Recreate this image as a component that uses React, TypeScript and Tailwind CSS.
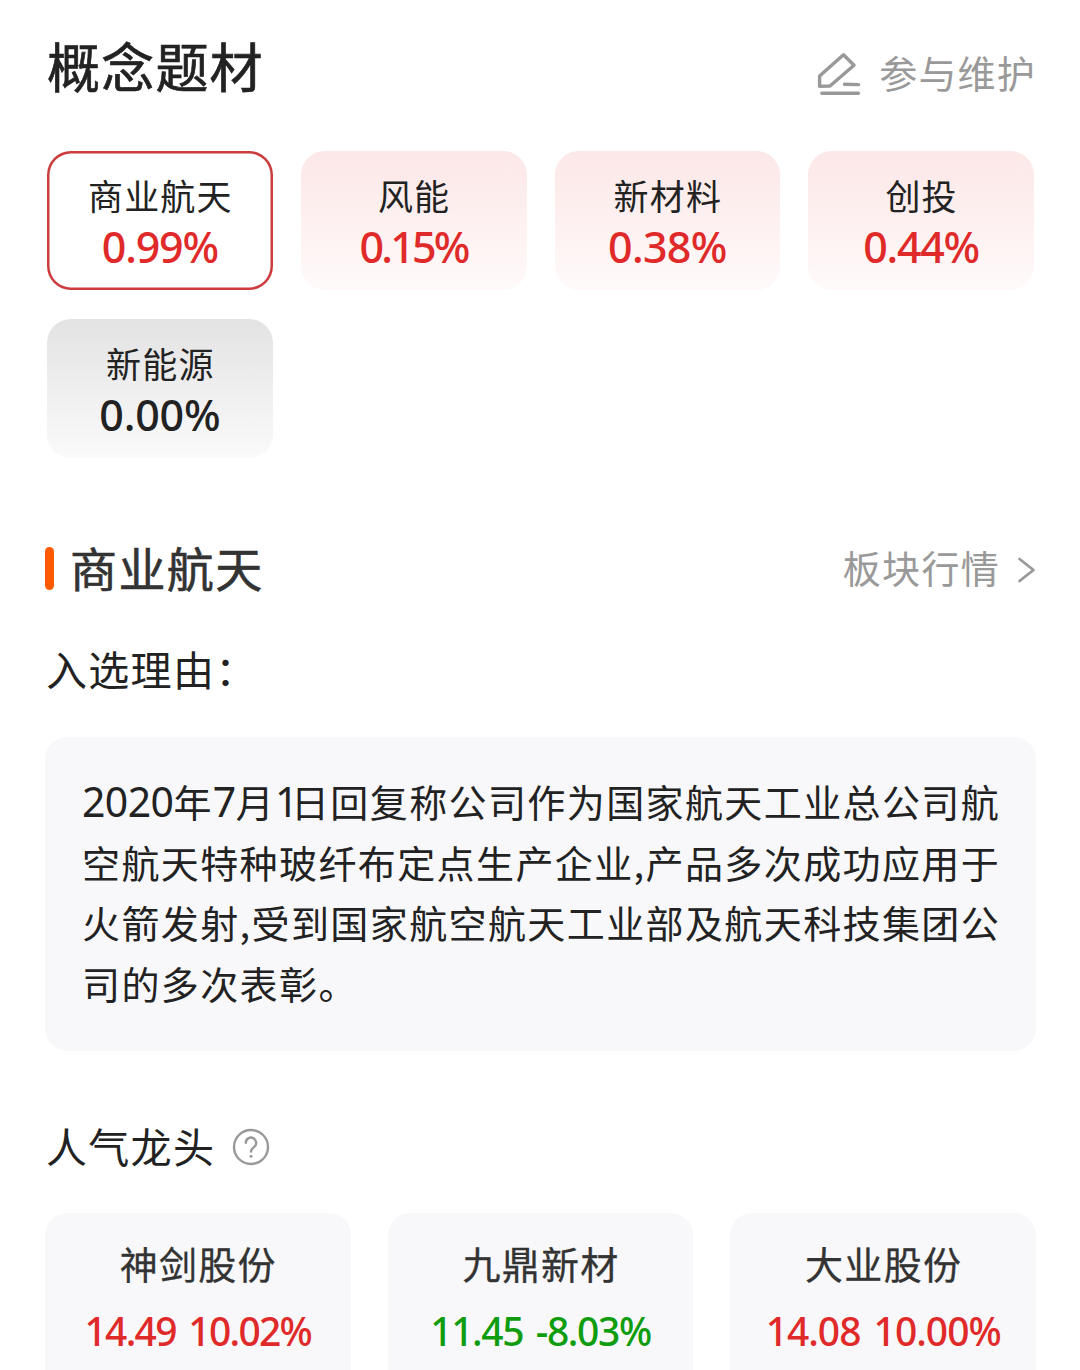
import clsx from "clsx";

type Trend = "up" | "down" | "flat";

interface Concept {
  name: string;
  change: string;
  trend: Trend;
  tracking: string;
}

interface Leader {
  name: string;
  quote: string;
  trend: Trend;
  tracking: string;
}

const concepts: Concept[] = [
  { name: "商业航天", change: "0.99%", trend: "up", tracking: "tracking-[-1.2px]" },
  { name: "风能", change: "0.15%", trend: "up", tracking: "tracking-[-2.8px]" },
  { name: "新材料", change: "0.38%", trend: "up", tracking: "tracking-[-0.7px]" },
  { name: "创投", change: "0.44%", trend: "up", tracking: "tracking-[-1.3px]" },
  { name: "新能源", change: "0.00%", trend: "flat", tracking: "tracking-[-0.2px]" },
];

const reasonLines = [
  "2020年7月1日回复称公司作为国家航天工业总公司航",
  "空航天特种玻纤布定点生产企业,产品多次成功应用于",
  "火箭发射,受到国家航空航天工业部及航天科技集团公",
  "司的多次表彰。",
];

const leaders: Leader[] = [
  { name: "神剑股份", quote: "14.49 10.02%", trend: "up", tracking: "tracking-[-1.7px]" },
  { name: "九鼎新材", quote: "11.45 -8.03%", trend: "down", tracking: "tracking-[-1.4px]" },
  { name: "大业股份", quote: "14.08 10.00%", trend: "up", tracking: "tracking-[-1px]" },
];

const trendColor: Record<Trend, string> = {
  up: "text-[#e02a2a]",
  down: "text-[#0f9d0f]",
  flat: "text-[#222]",
};

function EditIcon() {
  return (
    <svg
      width="44"
      height="44"
      viewBox="0 0 44 44"
      fill="none"
      stroke="#999"
      strokeWidth="3.4"
      strokeLinecap="round"
      strokeLinejoin="round"
    >
      <path d="M2.6 24 26.5 2.8 37 13.2 13 34 2.6 34.2Z" />
      <path d="M27.5 32.2 41.5 32.6M4.8 41.2H41.5" />
    </svg>
  );
}

function ReasonLine({ text }: { text: string }) {
  return (
    <p className="text-[38px] leading-[60.6px] tracking-[1.4px] whitespace-nowrap">
      {text.split(/(\d+)/).map((part, i) =>
        /^\d/.test(part) ? (
          <span
            key={i}
            className={clsx(
              "font-['Noto_Sans',sans-serif] text-[41px] leading-none",
              part === "1" ? "tracking-[-7.6px]" : "tracking-[-0.6px]",
            )}
          >
            {part}
          </span>
        ) : (
          part
        ),
      )}
    </p>
  );
}

function ConceptTag({ concept, active }: { concept: Concept; active: boolean }) {
  return (
    <button
      className={clsx(
        "flex h-[139px] flex-col items-center rounded-[24px] pt-[18px]",
        active && "bg-white shadow-[inset_0_0_0_2.5px_#cc3b3d]",
        !active && concept.trend === "up" && "bg-linear-to-b from-[#fce7e7] to-[#fffafa]",
        !active && concept.trend === "flat" && "bg-linear-to-b from-[#e3e3e3] to-[#fafafa]",
      )}
    >
      <span className="pl-[1px] text-[35px] leading-[52px] tracking-[1.2px] text-[#222]">
        {concept.name}
      </span>
      <span
        className={clsx(
          "font-['Noto_Sans',sans-serif] text-[43px] leading-[52px] font-medium",
          concept.tracking,
          trendColor[concept.trend],
        )}
      >
        {concept.change}
      </span>
    </button>
  );
}

function LeaderCard({ leader }: { leader: Leader }) {
  return (
    <div className="flex h-[200px] flex-col items-center rounded-[22px] bg-[#f8f8fa] pt-[20px]">
      <span className="pl-[1px] text-[38px] leading-[60px] tracking-[1.3px] text-[#333] [-webkit-text-stroke:0.3px_#333]">
        {leader.name}
      </span>
      <span
        className={clsx(
          "mt-[8px] font-['Noto_Sans',sans-serif] text-[39px] leading-[60px] font-medium whitespace-nowrap [word-spacing:4px]",
          leader.tracking,
          trendColor[leader.trend],
        )}
      >
        {leader.quote}
      </span>
    </div>
  );
}

export default function App() {
  return (
    <main className="h-[1370px] w-[1080px] overflow-hidden bg-white pt-[35px] pr-[44px] pl-[45px] font-['Noto_Sans_CJK_SC',sans-serif] text-[#222]">
      <header className="flex h-[60px] items-start justify-between pl-[2px]">
        <h1 className="text-[53px] leading-[60px] tracking-[1.2px] [-webkit-text-stroke:0.7px_#222]">
          概念题材
        </h1>
        <button className="flex items-start text-[#999]">
          <span className="mt-[17px] mr-[18px]">
            <EditIcon />
          </span>
          <span className="mt-[7px] text-[38px] leading-[60px] tracking-[1.2px]">参与维护</span>
        </button>
      </header>

      <section className="mt-[56px] grid grid-cols-4 gap-x-[28px] gap-y-[29px] pr-[2px] pl-[2px]">
        {concepts.map((concept, i) => (
          <ConceptTag key={concept.name} concept={concept} active={i === 0} />
        ))}
      </section>

      <div className="mt-[79px] flex h-[60px] items-center justify-between">
        <div className="flex items-center">
          <span className="mt-[3px] h-[43px] w-[9px] rounded-full bg-[#ff5a00]" />
          <h2 className="ml-[16px] text-[47px] leading-[60px] tracking-[1.4px] text-[#333] [-webkit-text-stroke:0.6px_#333]">
            商业航天
          </h2>
        </div>
        <button className="flex items-center text-[#999]">
          <span className="text-[38px] leading-[60px] tracking-[1.3px]">板块行情</span>
          <svg
            className="mt-[5px] ml-[17px]"
            width="19"
            height="28"
            viewBox="0 0 19 28"
            fill="none"
            stroke="#999"
            strokeWidth="2.8"
            strokeLinecap="round"
            strokeLinejoin="round"
          >
            <path d="M2.5 3 16.5 14 2.5 25" />
          </svg>
        </button>
      </div>

      <h3 className="mt-[41px] pl-[1px] text-[41px] leading-[60px] tracking-[1.3px]">
        入选理由：
      </h3>

      <section className="mt-[39px] h-[314px] rounded-[22px] bg-[#f8f8fa] pt-[34px] pr-[37px] pl-[37px]">
        {reasonLines.map((line) => (
          <ReasonLine key={line} text={line} />
        ))}
      </section>

      <div className="mt-[64px] flex h-[60px] items-center">
        <h3 className="pl-[1px] text-[41px] leading-[60px] tracking-[1.3px]">人气龙头</h3>
        <svg
          className="mt-[4px] ml-[17px]"
          width="38"
          height="38"
          viewBox="0 0 38 38"
          fill="none"
          stroke="#999"
          strokeWidth="2.4"
          strokeLinecap="round"
        >
          <circle cx="19" cy="19" r="17" />
          <path d="M13.8 14.8a5.2 5.2 0 1 1 8.4 4.1c-2 1.5-3.2 2.4-3.2 4.7" />
          <circle cx="19" cy="28.3" r="1.5" fill="#999" stroke="none" />
        </svg>
      </div>

      <section className="mt-[38px] grid grid-cols-3 gap-[37px]">
        {leaders.map((leader) => (
          <LeaderCard key={leader.name} leader={leader} />
        ))}
      </section>
    </main>
  );
}
